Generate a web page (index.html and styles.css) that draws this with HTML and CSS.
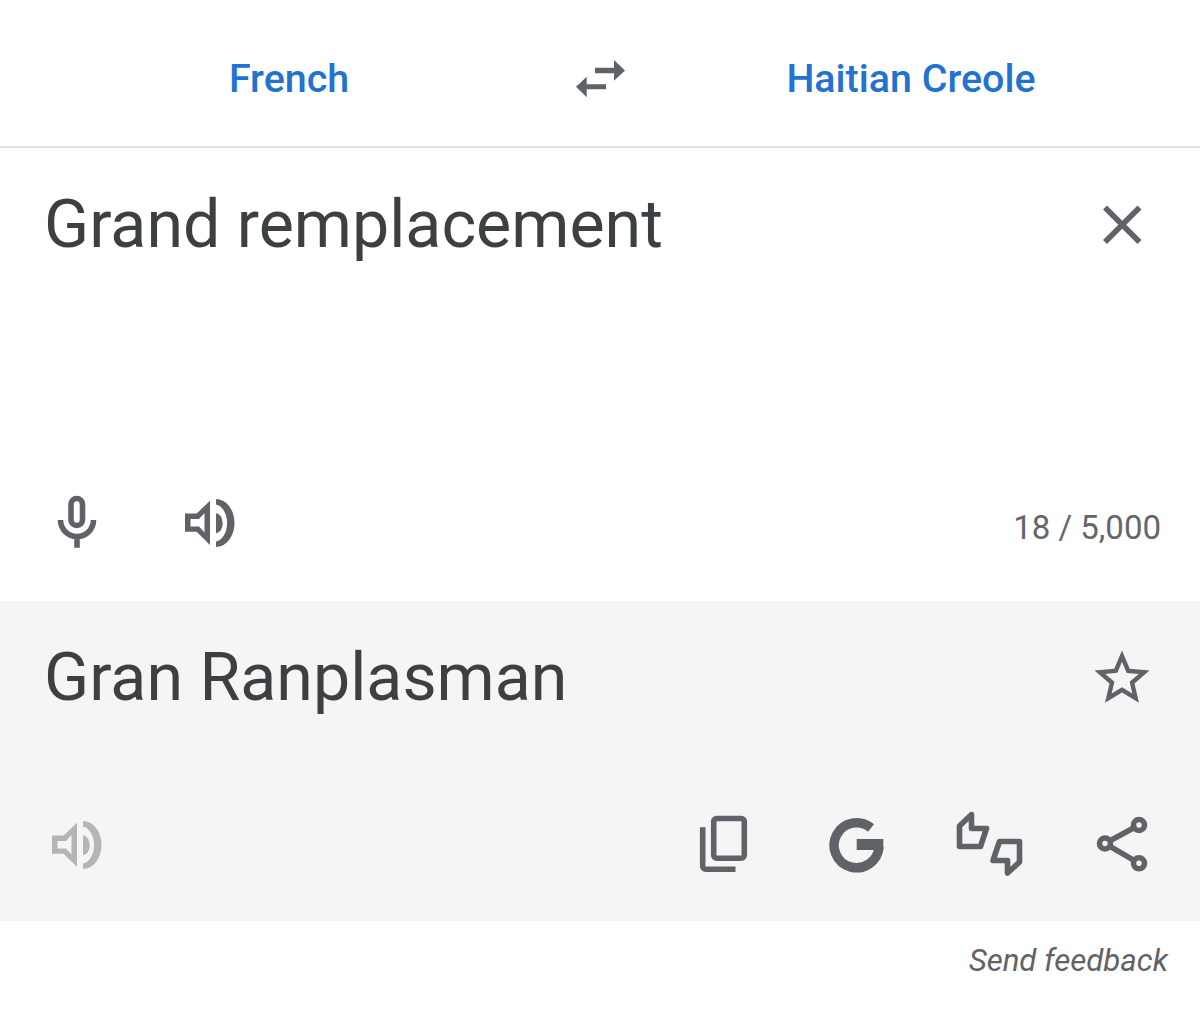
FILE: index.html
```html
<!DOCTYPE html>
<html lang="en">
<head>
    <meta charset="UTF-8">
    <meta name="viewport" content="width=device-width, initial-scale=1.0">
    <title>Translate</title>
    <link rel="stylesheet" href="styles.css">
</head>
<body>
    <header class="lang-bar">
        <a class="lang-name">French</a>
        <button class="icon-btn" aria-label="Swap languages">
            <svg viewBox="0 0 66 66"><path d="M28 22.7H47V15L58 25.5 47 35.7V28.3H28zM39 39.3H19.7V31.7L9 41.7 19.7 52.3V44.3H39z"/></svg>
        </button>
        <a class="lang-name">Haitian Creole</a>
    </header>

    <section class="source">
        <div class="text-row">
            <div class="text-value">Grand remplacement</div>
            <button class="icon-btn" aria-label="Clear">
                <svg class="line heavy" viewBox="0 0 66 66"><path d="M16 15.5 50.5 50M50.5 15.5 16 50"/></svg>
            </button>
        </div>
        <div class="tool-row">
            <button class="icon-btn" aria-label="Voice input">
                <svg class="line heavy" viewBox="0 0 66 66">
                    <rect x="27" y="9.5" width="11.5" height="27" rx="5.7"/>
                    <path d="M16.5 31a16.5 16.5 0 0 0 33 0M33 47V58.7"/>
                </svg>
            </button>
            <button class="icon-btn" aria-label="Listen">
                <svg viewBox="0 0 66 66"><use href="#speaker"/></svg>
            </button>
            <span class="char-count">18 / 5,000</span>
        </div>
    </section>

    <section class="target">
        <div class="text-row">
            <div class="text-value">Gran Ranplasman</div>
            <button class="icon-btn" aria-label="Save translation">
                <svg viewBox="0 0 24 24"><path d="M22 9.24l-7.19-.62L12 2 9.19 8.63 2 9.24l5.46 4.73L5.82 21 12 17.27 18.18 21l-1.63-7.03L22 9.24zM12 15.4l-3.76 2.27 1-4.28-3.32-2.88 4.38-.38L12 6.1l1.71 4.04 4.38.38-3.32 2.88 1 4.28L12 15.4z"/></svg>
            </button>
        </div>
        <div class="tool-row">
            <button class="icon-btn muted" aria-label="Listen">
                <svg viewBox="0 0 66 66"><use href="#speaker"/></svg>
            </button>
            <div class="tool-group">
                <button class="icon-btn" aria-label="Copy">
                    <svg class="line heavy" viewBox="0 0 66 66">
                        <rect x="23.7" y="7.5" width="30.6" height="39.7" rx="3"/>
                        <path d="M12.7 16.3V55.2a3 3 0 0 0 3 3H45.5"/>
                    </svg>
                </button>
                <button class="icon-btn" aria-label="Open in Google">
                    <svg viewBox="0 0 66 66">
                        <path class="g-arc" d="M48 17A22.5 22.5 0 1 0 56 36"/>
                        <rect x="33.7" y="28" width="26.6" height="11"/>
                    </svg>
                </button>
                <button class="icon-btn" aria-label="Rate translation">
                    <svg class="line heavy rounded" viewBox="0 0 66 66">
                        <path d="M15.5 3.5 3.5 15V35.5H24.5L30.5 17.5H15.5z"/>
                        <path d="M43.5 30.5H63.5V51L51.5 62V49.5H37z"/>
                    </svg>
                </button>
                <button class="icon-btn" aria-label="Share">
                    <svg class="line heavy" viewBox="0 0 66 66">
                        <circle cx="50" cy="14" r="5.5"/>
                        <circle cx="16" cy="32.5" r="5.5"/>
                        <circle cx="50" cy="52.3" r="5.5"/>
                        <path d="M21 29.7 45 16.8M21 35.4 45 49.4"/>
                    </svg>
                </button>
            </div>
        </div>
    </section>

    <footer class="feedback">Send feedback</footer>

    <svg class="defs" aria-hidden="true">
        <symbol id="speaker" viewBox="0 0 66 66">
            <path fill-rule="evenodd" d="M8 24.5H19.7L33 11.7V56L19.7 42.7H8zM13.5 30V37.5H22L27.5 43.5V24L22 30z"/>
            <path d="M39 24.3A6.7 10 0 0 1 39 44.3z"/>
            <path d="M39 10A18.5 24 0 0 1 39 58V52.5A13 18.7 0 0 0 39 15.5z"/>
        </symbol>
    </svg>
</body>
</html>
```

FILE: styles.css
```css
body {
    margin: 0;
    font-family: Roboto, sans-serif;
    background-color: #ffffff;
    color: #3c4043;
}
.defs {
    display: none;
}
.lang-bar {
    display: grid;
    grid-template-columns: 1fr 66px 1fr;
    align-items: center;
    height: 148px;
    box-sizing: border-box;
    padding: 10px 11px 0;
    border-bottom: 2px solid #e0e0e0;
}
.lang-name {
    font-size: 39.4px;
    font-weight: 500;
    text-align: center;
    color: #2272cf;
}
.icon-btn {
    flex: none;
    width: 66px;
    height: 66px;
    padding: 0;
    border: none;
    background: none;
    color: #5f6368;
}
.icon-btn svg {
    display: block;
    width: 66px;
    height: 66px;
    fill: currentColor;
    overflow: visible;
}
.icon-btn svg.line {
    fill: none;
    stroke: currentColor;
    stroke-width: 5;
}
.icon-btn svg.heavy {
    stroke-width: 5.6;
}
.icon-btn svg.rounded {
    stroke-linejoin: round;
}
.icon-btn .g-arc {
    fill: none;
    stroke: currentColor;
    stroke-width: 9.5;
}
.icon-btn.muted {
    color: #b4b5b6;
}
.source {
    display: flex;
    flex-direction: column;
    justify-content: space-between;
    height: 453px;
    box-sizing: border-box;
    padding: 44px 45px 46px 44px;
}
.target {
    display: flex;
    flex-direction: column;
    justify-content: space-between;
    height: 320px;
    box-sizing: border-box;
    padding: 44px 45px 44px 44px;
    background-color: #f5f5f5;
}
.text-row {
    display: flex;
    justify-content: space-between;
    align-items: flex-start;
}
.text-value {
    font-size: 66.3px;
    line-height: 64px;
}
.tool-row {
    display: flex;
    align-items: center;
    justify-content: space-between;
}
.source .tool-row {
    gap: 67px;
}
.tool-group {
    display: flex;
    gap: 67px;
}
.char-count {
    margin-left: auto;
    margin-right: -6px;
    padding-top: 10px;
    font-size: 33px;
    color: #63666a;
}
.feedback {
    padding: 21px 32px 0 0;
    text-align: right;
    font-size: 31.2px;
    font-style: italic;
    color: #5f6368;
}
```
